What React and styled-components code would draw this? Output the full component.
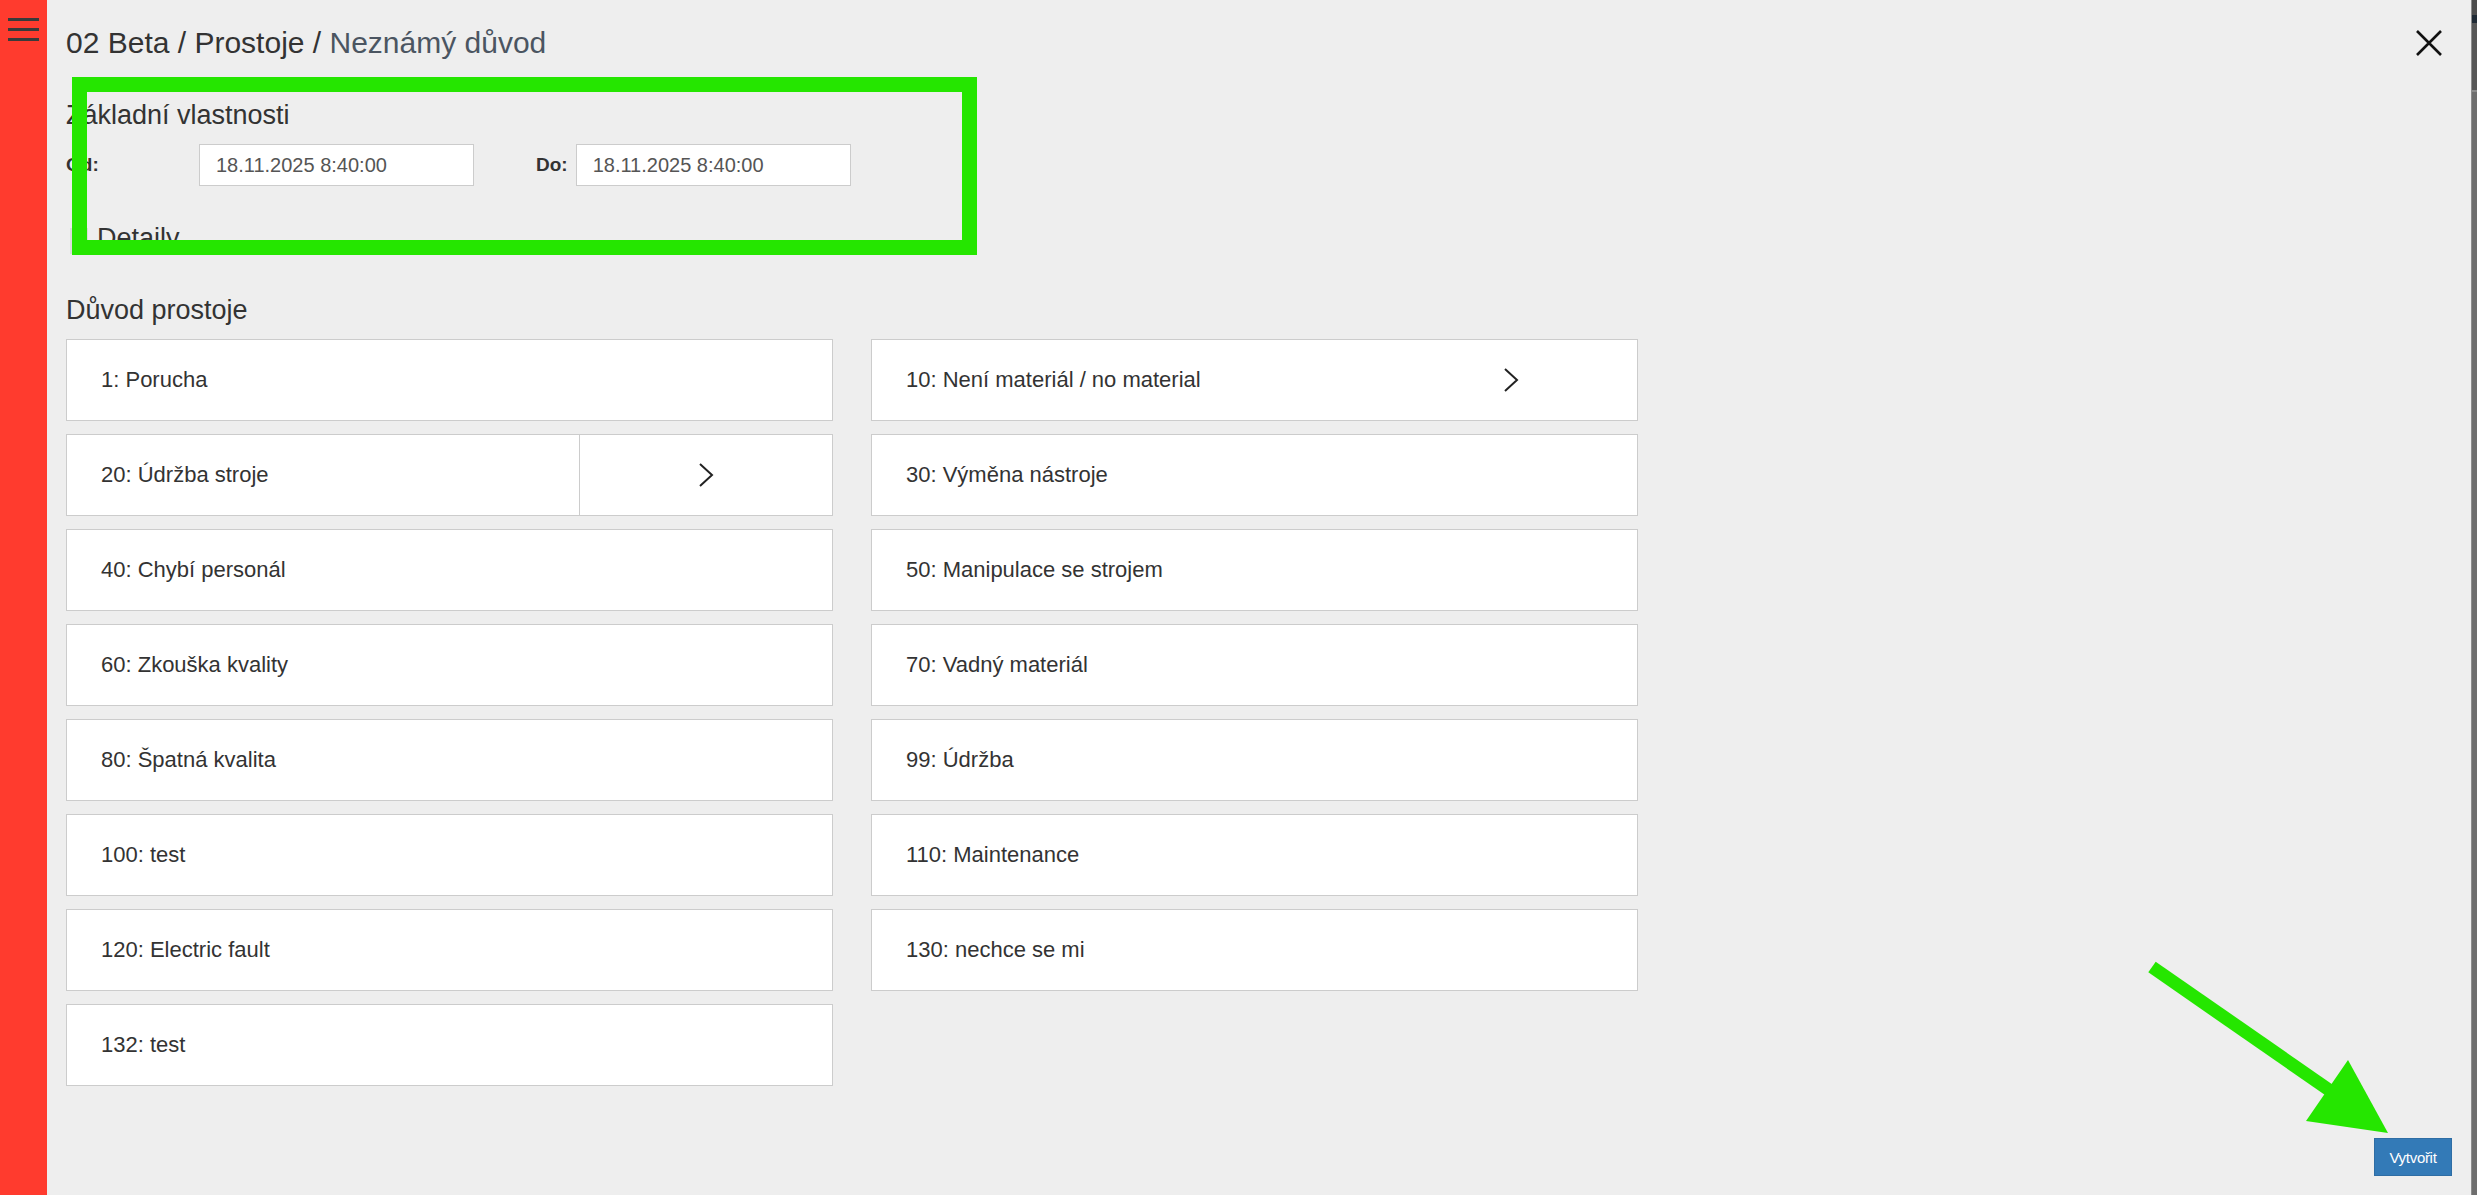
import styled, { createGlobalStyle } from "styled-components";

const GlobalStyle = createGlobalStyle`
  html, body {
    margin: 0;
    padding: 0;
    background: #eeeeee;
    font-family: "Liberation Sans", Arial, sans-serif;
    color: #333;
    overflow: hidden;
  }
  * {
    box-sizing: border-box;
  }
`;

const Screen = styled.div`
  position: relative;
  display: flex;
  width: 100%;
  height: 1195px;
  overflow: hidden;
`;

const Sidebar = styled.aside`
  width: 47px;
  flex-shrink: 0;
  background: #ff3b2e;
  padding: 18px 0 0 8px;
`;

const MenuButton = styled.div`
  display: flex;
  flex-direction: column;
  gap: 7px;
  width: 31px;
`;

const MenuBar = styled.span`
  display: block;
  height: 3px;
  background: #3a3a3a;
`;

const Modal = styled.main`
  flex: 1;
  display: flex;
  flex-direction: column;
  height: 1195px;
  background: #eeeeee;
  padding-left: 19px;
`;

const Header = styled.header`
  height: 86px;
  display: flex;
  align-items: center;
  justify-content: space-between;
  padding-right: 27px;
`;

const Breadcrumb = styled.h1`
  margin: 0;
  font-size: 30px;
  font-weight: 400;
  color: #333;
`;

const Current = styled.span`
  color: #4b5561;
`;

const CloseButton = styled.button`
  border: none;
  background: none;
  padding: 0;
  width: 30px;
  height: 30px;
  display: flex;
  align-items: center;
  justify-content: center;
  cursor: pointer;
`;

const SectionTitle = styled.h2`
  margin: ${(p) => p.$top}px 0 0;
  font-size: 27px;
  line-height: 31px;
  font-weight: 400;
  color: #333;
`;

const FieldRow = styled.div`
  display: flex;
  align-items: center;
  gap: 62px;
  margin-top: 13px;
  height: 42px;
`;

const Field = styled.label`
  display: flex;
  align-items: center;
`;

const FieldLabel = styled.span`
  width: ${(p) => (p.$width ? `${p.$width}px` : "auto")};
  margin-right: ${(p) => (p.$width ? 0 : 8)}px;
  font-size: 19px;
  font-weight: 700;
  color: #333;
`;

const DateInput = styled.input`
  width: 275px;
  height: 42px;
  border: 1px solid #cccccc;
  background: #fff;
  padding: 0 0 0 16px;
  font-family: "Liberation Sans", Arial, sans-serif;
  font-size: 20px;
  color: #555;
  outline: none;
`;

const Collapse = styled.div`
  display: flex;
  align-items: center;
  gap: 9px;
  margin-top: 37px;
  height: 31px;
`;

const CollapseToggle = styled.span`
  width: 18px;
  height: 26px;
  margin-left: 4px;
  background: #dcdcdc;
  align-self: flex-end;
`;

const CollapseTitle = styled.span`
  font-size: 27px;
  line-height: 31px;
  color: #333;
`;

const ReasonGrid = styled.div`
  display: grid;
  grid-template-columns: 767px 767px;
  column-gap: 38px;
  row-gap: 13px;
  margin-top: 13px;
`;

const ReasonCard = styled.div`
  display: flex;
  height: 82px;
  background: #fff;
  border: 1px solid #cccccc;
`;

const ReasonLabel = styled.span`
  flex: 1;
  display: flex;
  align-items: center;
  padding-left: 34px;
  font-size: 22px;
  color: #333;
`;

const ReasonMore = styled.span`
  width: 253px;
  display: flex;
  align-items: center;
  justify-content: center;
  border-left: 1px solid ${(p) => (p.$divided ? "#cccccc" : "transparent")};
`;

const Footer = styled.footer`
  margin-top: auto;
  display: flex;
  justify-content: flex-end;
  padding: 0 19px 19px 0;
`;

const PrimaryButton = styled.button`
  width: 78px;
  height: 38px;
  border: 1px solid #2e6da4;
  background: #337ab7;
  color: #fff;
  font-family: "Liberation Sans", Arial, sans-serif;
  font-size: 15px;
  letter-spacing: -0.3px;
  padding: 0;
  cursor: pointer;
`;

const PageEdge = styled.div`
  width: 6px;
  flex-shrink: 0;
  background: linear-gradient(
    to bottom,
    #4d4d4d 0,
    #4d4d4d 15px,
    #1f2a35 15px,
    #1f2a35 23px,
    #575757 23px,
    #575757 90px,
    #8a8a8a 90px,
    #8a8a8a 92px,
    #6e6e6e 92px
  );
  border-left: 1px solid #8c8c8c;
`;

const Highlight = styled.div`
  position: absolute;
  left: 72px;
  top: 77px;
  width: 905px;
  height: 178px;
  border: 15px solid #25e600;
  pointer-events: none;
`;

const Pointer = styled.svg`
  position: absolute;
  left: 2140px;
  top: 950px;
  pointer-events: none;
`;

const reasons = [
  { label: "1: Porucha" },
  { label: "10: Není materiál / no material", more: true },
  { label: "20: Údržba stroje", more: true, divided: true },
  { label: "30: Výměna nástroje" },
  { label: "40: Chybí personál" },
  { label: "50: Manipulace se strojem" },
  { label: "60: Zkouška kvality" },
  { label: "70: Vadný materiál" },
  { label: "80: Špatná kvalita" },
  { label: "99: Údržba" },
  { label: "100: test" },
  { label: "110: Maintenance" },
  { label: "120: Electric fault" },
  { label: "130: nechce se mi" },
  { label: "132: test" },
];

const Chevron = () => (
  <svg width="16" height="26" viewBox="0 0 16 26">
    <polyline
      points="2,2 14,13 2,24"
      fill="none"
      stroke="#222"
      strokeWidth="2"
      strokeLinejoin="miter"
    />
  </svg>
);

const App = () => {
  return (
    <>
      <GlobalStyle />
      <Screen>
        <Sidebar>
          <MenuButton>
            <MenuBar />
            <MenuBar />
            <MenuBar />
          </MenuButton>
        </Sidebar>

        <Modal>
          <Header>
            <Breadcrumb>
              02 Beta / Prostoje / <Current>Neznámý důvod</Current>
            </Breadcrumb>
            <CloseButton aria-label="Zavřít">
              <svg width="28" height="28" viewBox="0 0 28 28">
                <path
                  d="M2 2 L26 26 M26 2 L2 26"
                  stroke="#111"
                  strokeWidth="2.6"
                  fill="none"
                />
              </svg>
            </CloseButton>
          </Header>

          <SectionTitle $top={14}>Základní vlastnosti</SectionTitle>
          <FieldRow>
            <Field>
              <FieldLabel $width={133}>Od:</FieldLabel>
              <DateInput defaultValue="18.11.2025 8:40:00" />
            </Field>
            <Field>
              <FieldLabel>Do:</FieldLabel>
              <DateInput defaultValue="18.11.2025 8:40:00" />
            </Field>
          </FieldRow>

          <Collapse>
            <CollapseToggle />
            <CollapseTitle>Detaily</CollapseTitle>
          </Collapse>

          <SectionTitle $top={41}>Důvod prostoje</SectionTitle>
          <ReasonGrid>
            {reasons.map((r) => (
              <ReasonCard key={r.label}>
                <ReasonLabel>{r.label}</ReasonLabel>
                {r.more && (
                  <ReasonMore $divided={r.divided}>
                    <Chevron />
                  </ReasonMore>
                )}
              </ReasonCard>
            ))}
          </ReasonGrid>

          <Footer>
            <PrimaryButton>Vytvořit</PrimaryButton>
          </Footer>
        </Modal>

        <PageEdge />

        <Highlight />
        <Pointer width="260" height="195" viewBox="0 0 260 195">
          <line
            x1="12"
            y1="17"
            x2="192"
            y2="142"
            stroke="#25e600"
            strokeWidth="13"
          />
          <polygon points="208,110 166,171 248,183" fill="#25e600" />
        </Pointer>
      </Screen>
    </>
  );
};

export default App;
